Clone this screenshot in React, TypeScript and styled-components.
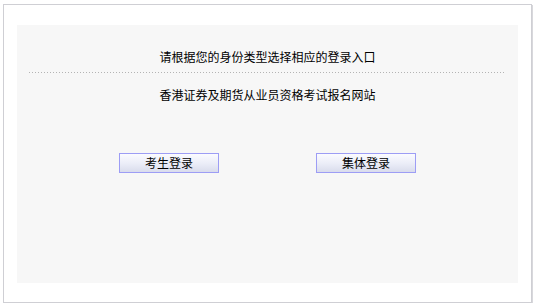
import React from "react";
import styled, {createGlobalStyle} from "styled-components";

const GlobalStyle = createGlobalStyle`
  html, body {
    margin: 0;
    padding: 0;
    background: #ffffff;
  }
  body {
    font-family: "Noto Sans CJK SC", "Liberation Sans", sans-serif;
    font-size: 12px;
    color: #000000;
  }
`

const App = () => {
    return (
        <>
            <GlobalStyle/>
            <Frame>
                <Panel>
                    <Title>请根据您的身份类型选择相应的登录入口</Title>
                    <Divider/>
                    <SubTitle>香港证券及期货从业员资格考试报名网站</SubTitle>
                    <ButtonRow>
                        <LoginButton type="button">考生登录</LoginButton>
                        <LoginButton type="button">集体登录</LoginButton>
                    </ButtonRow>
                </Panel>
            </Frame>
        </>
    );
};

export default App;

const Frame = styled.div`
  box-sizing: border-box;
  width: 529px;
  height: 299px;
  margin: 4px 0 0 3px;
  padding: 20px 13px 0;
  background: #ffffff;
  border: 1px solid #cfcfd4;
  box-shadow: 1px 1px 0 #d8d8dc;
`
const Panel = styled.div`
  box-sizing: border-box;
  width: 501px;
  height: 258px;
  padding: 22px 12px 0;
  background: #f7f7f7;
`
const Title = styled.div`
  height: 20px;
  line-height: 20px;
  text-align: center;
`
const Divider = styled.div`
  height: 1px;
  margin-top: 5px;
  background: linear-gradient(to right, #b4b4b4 1px, transparent 1px) repeat-x;
  background-size: 3px 1px;
`
const SubTitle = styled.div`
  height: 20px;
  line-height: 20px;
  margin-top: 12px;
  text-align: center;
`
const ButtonRow = styled.div`
  display: flex;
  justify-content: center;
  gap: 97px;
  margin-top: 48px;
`
const LoginButton = styled.button`
  box-sizing: border-box;
  width: 100px;
  height: 20px;
  padding: 0;
  border: 1px solid #9d9df5;
  background: linear-gradient(to bottom, #fbfbff 0%, #eceef8 50%, #d9dcec 100%);
  font-family: "Noto Sans CJK SC", "Liberation Sans", sans-serif;
  font-size: 12px;
  line-height: 18px;
  color: #000000;
  cursor: pointer;
`
